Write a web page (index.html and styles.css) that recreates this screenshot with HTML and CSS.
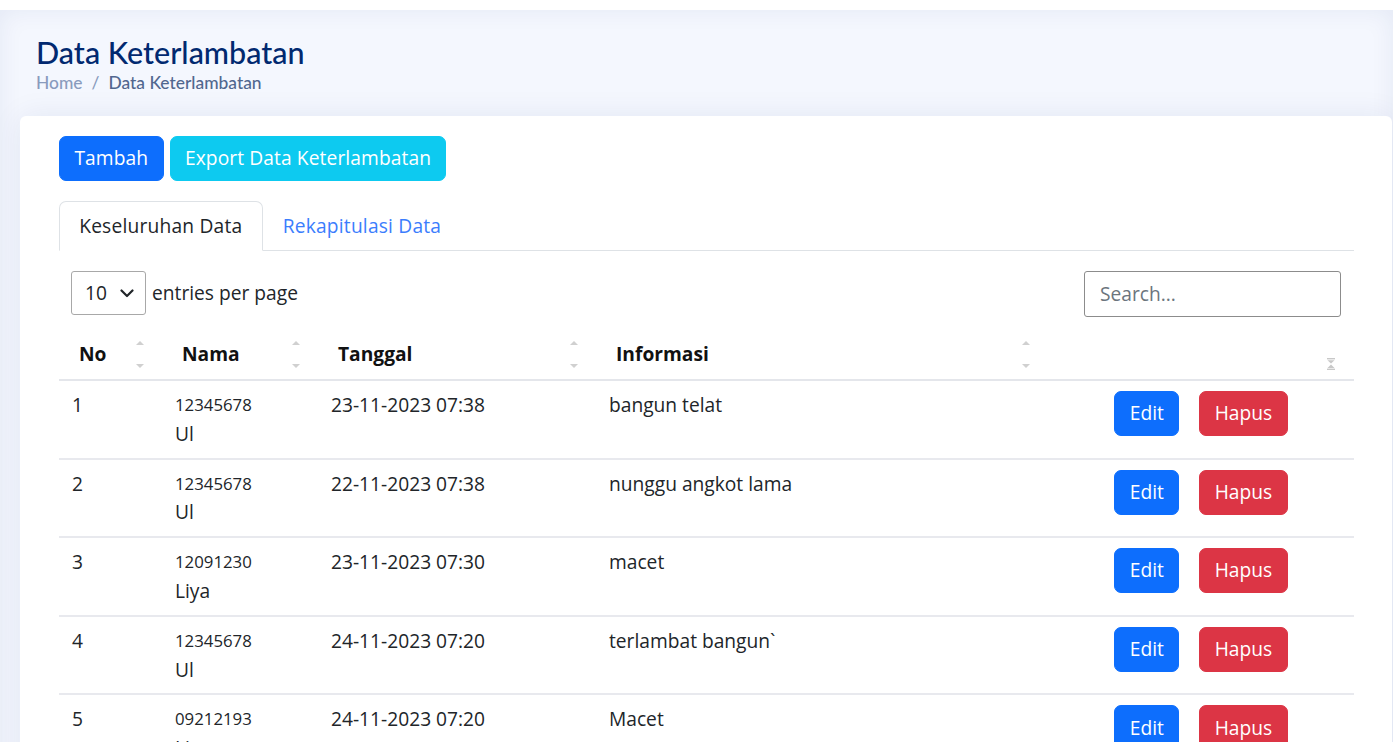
FILE: index.html
```html
<!DOCTYPE html>
<html lang="id">
<head>
<meta charset="utf-8">
<title>Data Keterlambatan</title>
<link rel="stylesheet" href="styles.css">
</head>
<body>
<div class="topstrip"></div>
<main class="main">
  <div class="pagetitle">
    <h1>Data Keterlambatan</h1>
    <nav class="breadcrumb">
      <span class="bc-home">Home</span>
      <span class="bc-sep">/</span>
      <span class="bc-active">Data Keterlambatan</span>
    </nav>
  </div>

  <section class="card">
    <div class="actions">
      <button class="btn btn-primary">Tambah</button>
      <button class="btn btn-info">Export Data Keterlambatan</button>
    </div>

    <ul class="tabs">
      <li class="tab active">Keseluruhan Data</li>
      <li class="tab">Rekapitulasi Data</li>
    </ul>

    <div class="dt-top">
      <div class="dt-length">
        <div class="select">
          <span>10</span>
          <svg class="chev" width="14" height="9" viewBox="0 0 14 9"><path d="M1.5 1.5 L7 7 L12.5 1.5" fill="none" stroke="#212529" stroke-width="2.2" stroke-linecap="round" stroke-linejoin="round"/></svg>
        </div>
        <span class="dt-label">entries per page</span>
      </div>
      <div class="search">Search...</div>
    </div>

    <table class="table">
      <colgroup>
        <col class="c1"><col class="c2"><col class="c3"><col class="c4"><col class="c5">
      </colgroup>
      <thead>
        <tr>
          <th><span class="th-in">No<span class="sorter"></span></span></th>
          <th><span class="th-in">Nama<span class="sorter"></span></span></th>
          <th><span class="th-in">Tanggal<span class="sorter"></span></span></th>
          <th><span class="th-in">Informasi<span class="sorter"></span></span></th>
          <th><span class="th-in"><svg class="hg" width="10" height="12" viewBox="0 0 10 12"><rect x="1" y="0" width="8" height="1.4" fill="#c8c8c8"/><path d="M1.5 2.2 H8.5 L5 5.6 Z" fill="#c8c8c8"/><path d="M1.5 10 H8.5 L5 6.6 Z" fill="#c8c8c8"/><rect x="1" y="10.6" width="8" height="1.4" fill="#c8c8c8"/></svg></span></th>
        </tr>
      </thead>
      <tbody>
        <tr>
          <td>1</td>
          <td><div class="nis">12345678</div><div>Ul</div></td>
          <td>23-11-2023 07:38</td>
          <td>bangun telat</td>
          <td><div class="row-actions"><button class="btn btn-primary">Edit</button><button class="btn btn-danger">Hapus</button></div></td>
        </tr>
        <tr>
          <td>2</td>
          <td><div class="nis">12345678</div><div>Ul</div></td>
          <td>22-11-2023 07:38</td>
          <td>nunggu angkot lama</td>
          <td><div class="row-actions"><button class="btn btn-primary">Edit</button><button class="btn btn-danger">Hapus</button></div></td>
        </tr>
        <tr>
          <td>3</td>
          <td><div class="nis">12091230</div><div>Liya</div></td>
          <td>23-11-2023 07:30</td>
          <td>macet</td>
          <td><div class="row-actions"><button class="btn btn-primary">Edit</button><button class="btn btn-danger">Hapus</button></div></td>
        </tr>
        <tr>
          <td>4</td>
          <td><div class="nis">12345678</div><div>Ul</div></td>
          <td>24-11-2023 07:20</td>
          <td>terlambat bangun`</td>
          <td><div class="row-actions"><button class="btn btn-primary">Edit</button><button class="btn btn-danger">Hapus</button></div></td>
        </tr>
        <tr>
          <td>5</td>
          <td><div class="nis">09212193</div><div>Liya</div></td>
          <td>24-11-2023 07:20</td>
          <td>Macet</td>
          <td><div class="row-actions"><button class="btn btn-primary">Edit</button><button class="btn btn-danger">Hapus</button></div></td>
        </tr>
      </tbody>
    </table>
  </section>
</main>
</body>
</html>
```

FILE: styles.css
```css
* { box-sizing: border-box; }

html, body {
  margin: 0;
  padding: 0;
  background: #ffffff;
  font-family: "Open Sans", "Noto Sans", sans-serif;
  color: #212529;
  font-size: 19.2px;
  line-height: 28.8px;
}

.topstrip {
  height: 10px;
  background: #ffffff;
}

.main {
  background: #f4f7fe;
  box-shadow: inset 0 0 24px rgba(1, 41, 112, 0.07);
  padding: 0 1px 40px 20px;
  min-height: 732px;
}

.pagetitle {
  padding: 25px 0 0 16px;
  height: 106px;
}

.pagetitle h1 {
  margin: 0;
  font-family: "Lato", "Noto Sans", sans-serif;
  font-weight: 500;
  font-size: 30.5px;
  line-height: 35px;
  color: #012970;
}

.breadcrumb {
  margin-top: 2px;
  font-family: "Lato", "Noto Sans", sans-serif;
  font-size: 17.4px;
  line-height: 22px;
  font-weight: 500;
  display: flex;
  gap: 9px;
}

.bc-home, .bc-sep { color: #899bbd; }
.bc-active { color: #51678f; }

.card {
  background: #ffffff;
  border-radius: 6px;
  box-shadow: 0 0 30px rgba(1, 41, 112, 0.08);
  padding: 20px 38px 0 39px;
  overflow: hidden;
}

.actions {
  display: flex;
  gap: 6px;
}

.btn {
  font-family: inherit;
  font-size: 19.2px;
  line-height: 28.8px;
  padding: 7.2px 14.4px;
  border: 1px solid transparent;
  border-radius: 7px;
  color: #ffffff;
  cursor: pointer;
}

.actions .btn { letter-spacing: 0.1px; }

.btn-primary { background: #0d6efd; border-color: #0d6efd; }
.btn-info { background: #0dcaf0; border-color: #0dcaf0; }
.btn-danger { background: #dc3545; border-color: #dc3545; }

.tabs {
  list-style: none;
  margin: 20px 0 0;
  padding: 0;
  display: flex;
  border-bottom: 1px solid #dee2e6;
}

.tab {
  padding: 9.6px 19.2px;
  border: 1px solid transparent;
  border-top-left-radius: 7px;
  border-top-right-radius: 7px;
  margin-bottom: -1px;
  color: #3b7dfd;
  letter-spacing: 0.2px;
}

.tab.active {
  color: #212529;
  background: #fff;
  border-color: #dee2e6 #dee2e6 #fff;
}

.dt-top {
  display: flex;
  justify-content: space-between;
  align-items: flex-start;
  padding: 20px 13px 0 12px;
  height: 79px;
}

.dt-length {
  display: flex;
  align-items: center;
  gap: 6px;
}

.select {
  width: 75px;
  height: 44px;
  border: 1px solid #a8a8a8;
  border-radius: 3px;
  display: flex;
  align-items: center;
  justify-content: space-between;
  padding: 0 11px 0 13px;
}

.dt-label { color: #212529; }

.search {
  width: 257px;
  height: 46px;
  border: 1px solid #8c8c8c;
  border-radius: 3px;
  padding: 0 15px;
  display: flex;
  align-items: center;
  color: #6c757d;
}

.table {
  width: 100%;
  border-collapse: collapse;
  table-layout: fixed;
}

.c1 { width: 103px; }
.c2 { width: 156px; }
.c3 { width: 278px; }
.c4 { width: 452px; }
.c5 { width: auto; }

th {
  text-align: left;
  font-weight: 700;
  padding: 10px 0 10px 20px;
  border-bottom: 2px solid #e4e6eb;
  color: #111;
}

.th-in {
  display: block;
  position: relative;
  height: 28.8px;
}

.sorter::before,
.sorter::after {
  content: "";
  position: absolute;
  right: 18px;
  width: 0;
  height: 0;
  border-left: 4px solid transparent;
  border-right: 4px solid transparent;
}

.sorter::before {
  top: 1px;
  border-bottom: 4px solid #d0d0d0;
}

.sorter::after {
  bottom: 1px;
  border-top: 4px solid #d0d0d0;
}

.hg {
  position: absolute;
  right: 18px;
  top: 18px;
}

td {
  padding: 10px 13px 9px;
  vertical-align: top;
  border-bottom: 2px solid #e8e9ee;
}

.nis {
  font-size: 16.8px;
}

.row-actions {
  display: flex;
  justify-content: center;
  gap: 20px;
}
```
